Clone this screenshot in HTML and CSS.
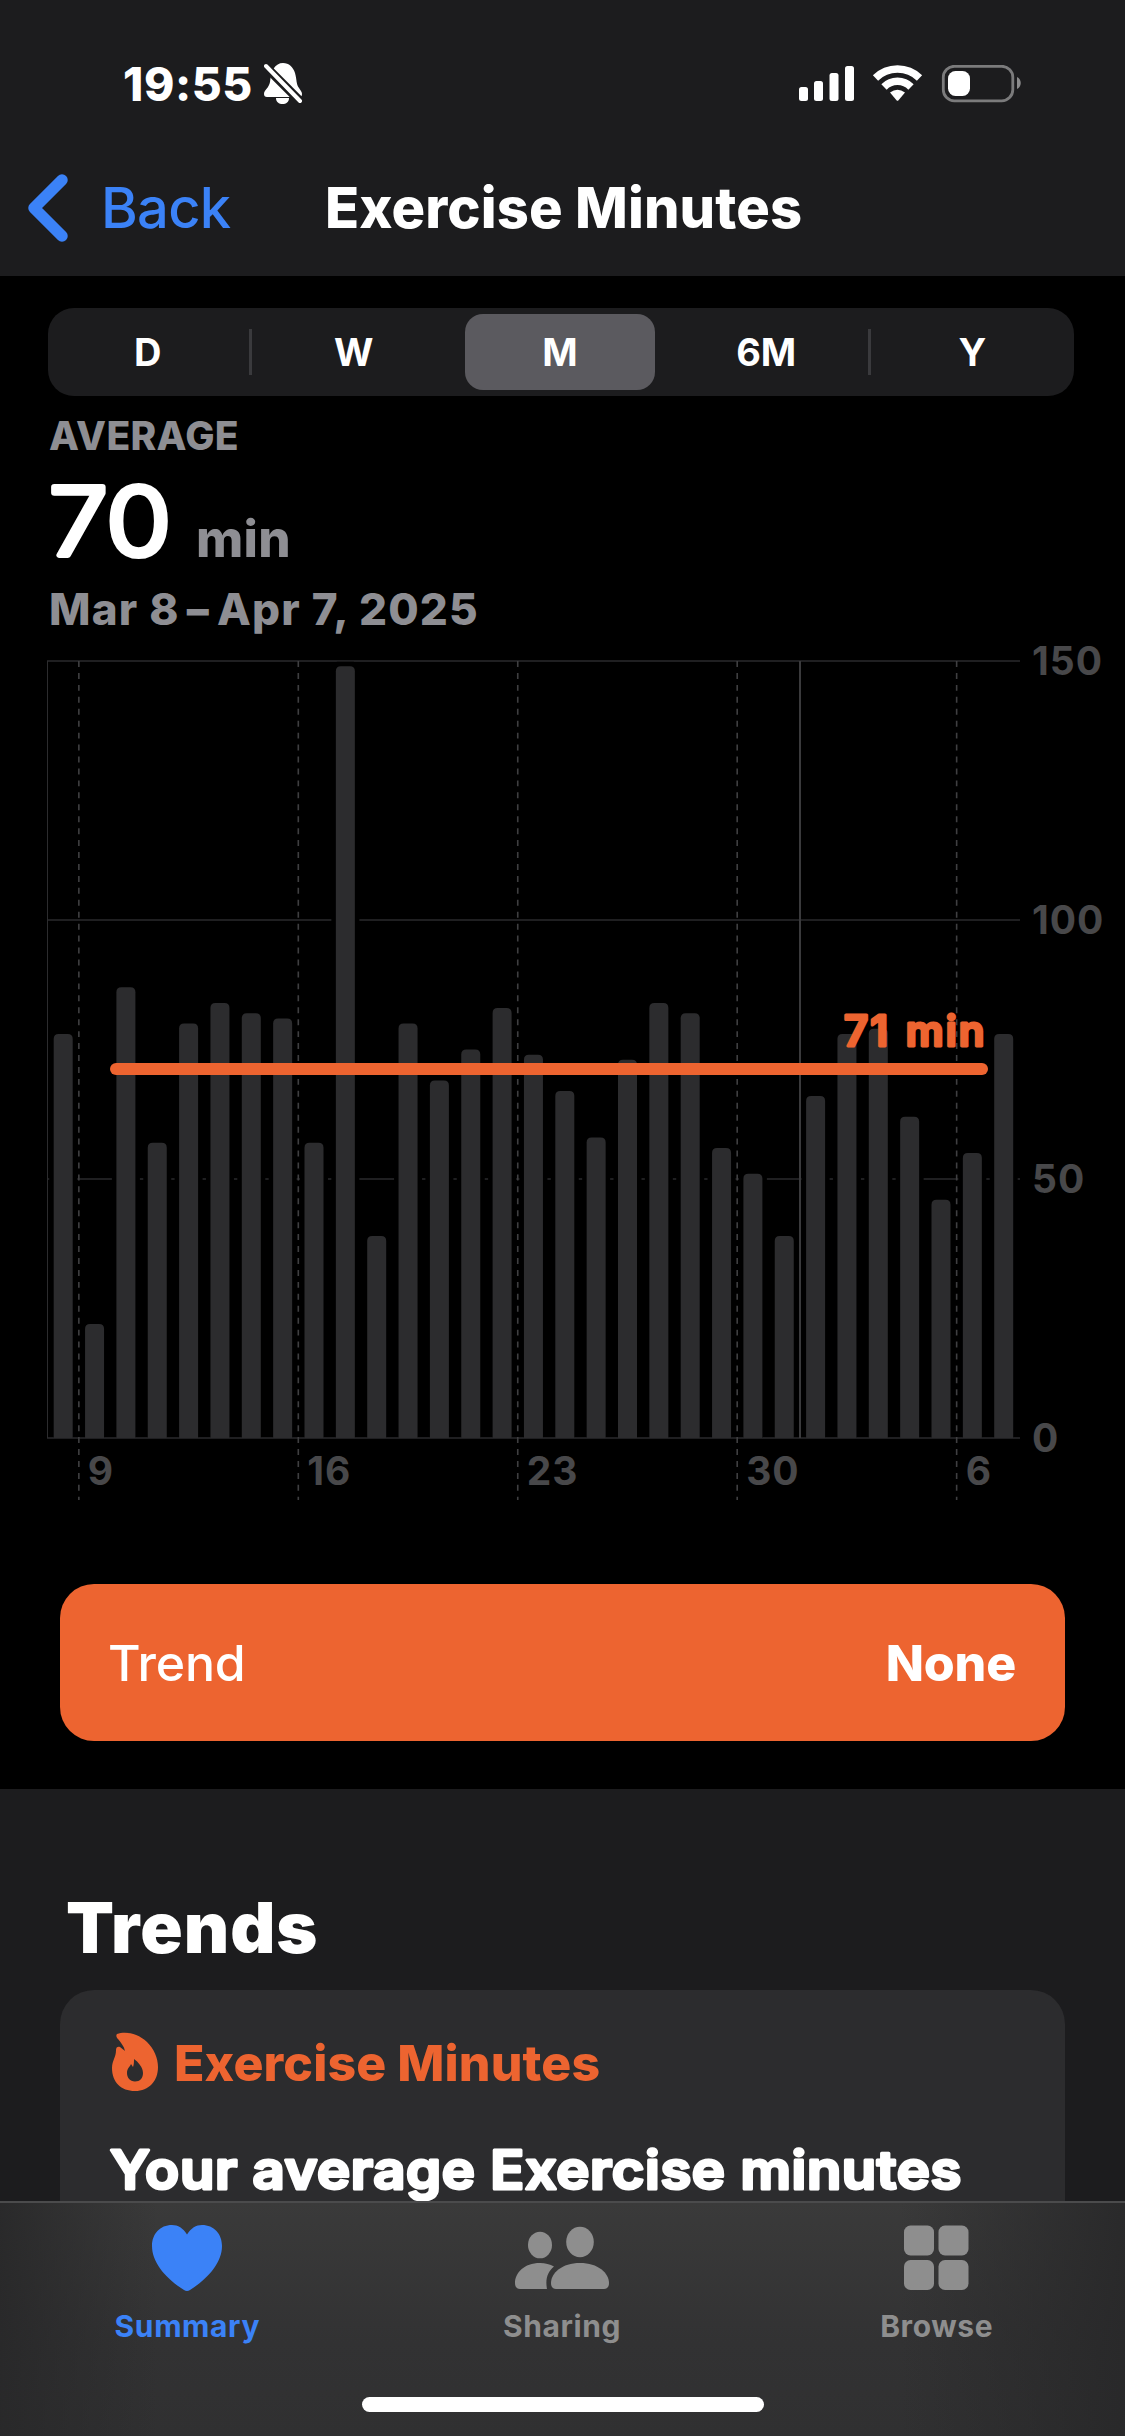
FILE: index.html
```html
<!DOCTYPE html>
<html lang="en">
<head>
    <meta charset="utf-8">
    <title>Exercise Minutes</title>
    <link rel="stylesheet" href="styles.css">
</head>
<body onload="drawChart()">
    <div class="content">
        <header>
            <div class="status">
                <span class="time">19:55</span>
                <svg class="bell" width="40" height="42" viewBox="0 0 40 42">
                    <path fill="#fff" d="M10 5C12 2 15 0 19 0c6 0 10 4 12 10 2 7 1 11 4 15 2 3 3 4 3 6 0 2-1 3-2 3H3c-2 0-3-1-3-3 0-4 5-6 6-12 1-6 1-10 4-14z"/>
                    <path fill="#fff" d="M12 35h13c0 4-3 6-6.500 6S12 39 12 35z"/>
                    <path stroke="#1c1c1e" stroke-width="9" d="M-2 0L42 44"/>
                    <path stroke="#fff" stroke-width="4" stroke-linecap="round" d="M2 3L36 38"/>
                </svg>
                <svg class="signal" width="222" height="38" viewBox="799 64 222 38">
                    <g fill="#fff">
                        <rect x="799" y="86" width="9" height="14" rx="2.500"/>
                        <rect x="814" y="80" width="9" height="20" rx="2.500"/>
                        <rect x="829.500" y="72" width="9" height="28" rx="2.500"/>
                        <rect x="845" y="65" width="9" height="35" rx="2.500"/>
                    </g>
                    <path fill="none" stroke="#fff" stroke-width="7.500" d="M875.500 77A31.500 31.500 0 0 1 919.500 77M884 86A19 19 0 0 1 911 86"/>
                    <path fill="#fff" d="M890 91.500Q897.500 86 905 91.500L898.500 99.300Q897.500 100.300 896.500 99.300z"/>
                    <rect x="943.300" y="65.300" width="69.500" height="34.500" rx="11" fill="none" stroke="#7b7b7c" stroke-width="2.800"/>
                    <rect x="948" y="70" width="22" height="25" rx="7.500" fill="#fff"/>
                    <path fill="#8b8b8c" d="M1017 76c5 2 5 10 0 12z"/>
                </svg>
            </div>
            <nav>
                <svg class="chevron" width="42" height="68" viewBox="0 0 42 68">
                    <path fill="none" stroke="#3b82f7" stroke-width="11.500" stroke-linecap="round" stroke-linejoin="round" d="M34 6L6 34L34 62"/>
                </svg>
                <span class="back">Back</span>
                <h1>Exercise Minutes</h1>
            </nav>
        </header>

        <div class="segments">
            <span>D</span>
            <i></i>
            <span>W</span>
            <i class="hidden"></i>
            <span class="selected">M</span>
            <i class="hidden"></i>
            <span>6M</span>
            <i></i>
            <span>Y</span>
        </div>

        <div class="stats">
            <div class="label">AVERAGE</div>
            <div class="value">
                <svg class="number" width="124" height="100" viewBox="46 471 124 100">
                    <text class="round" x="49" y="555" textLength="122" lengthAdjust="spacingAndGlyphs">70</text>
                </svg>
                <span class="unit">min</span>
            </div>
            <div class="date">Mar 8<b>–</b>Apr 7, 2025</div>
        </div>

        <svg class="chart" id="chart" width="1125" height="876" viewBox="0 634 1125 876"></svg>

        <div class="trend">
            <span>Trend</span>
            <b>None</b>
        </div>

        <div class="trends">
            <h2>Trends</h2>
            <div class="card">
                <div class="card-title">
                    <svg width="48" height="60" viewBox="0 0 48 60">
                        <path fill="#ed6430" d="M6 2C14-1 27 1 36 10c7 7 11 16 11 25 0 14-9 24-23 24S1 50 1 36c0-8 4-10 4-18 0-3 2-4 4-3l5 4C13 14 10 11 7 7 5 5 5 3 6 2z"/>
                        <path fill="#2c2c2e" d="M23 27c4 3 9 8 9 14 0 5-3 8.500-8 8.500s-8-4-8-8.500c0-5 3-6 4-9l2 3c1-3 1-5 1-8z"/>
                    </svg>
                    <span>Exercise Minutes</span>
                </div>
                <svg class="headline" width="870" height="70" viewBox="108 2136 870 70">
                    <text class="round" x="110" y="2190" textLength="852" lengthAdjust="spacingAndGlyphs">Your average Exercise minutes</text>
                </svg>
            </div>
        </div>
    </div>

    <footer>
        <div class="tabs">
            <div class="tab active">
                <svg width="70" height="66" viewBox="0 0 70 66">
                    <path fill="#3b82f7" d="M35 9.500C31 3 26 0 20 0 8 0 0 9 0 21c0 16 13 32 32 44q3 2 6 0c19-12 32-28 32-44C70 9 62 0 50 0 44 0 39 3 35 9.500z"/>
                </svg>
                <span>Summary</span>
            </div>
            <div class="tab">
                <svg width="94" height="66" viewBox="515 2225 94 66">
                    <g fill="#8e8e8e">
                        <ellipse cx="540" cy="2245" rx="12" ry="13.300"/>
                        <ellipse cx="580" cy="2242" rx="13.800" ry="15.200"/>
                        <path d="M551 2283c0-10 11-20 29-20s29 10 29 20c0 4-2 6-5 6h-48c-3 0-5-2-5-6z"/>
                        <path d="M515 2283c0-10 9-20 25-20q8 0 14 3.500c-6 5-9 12-7 22.500h-27c-3 0-5-2-5-6z"/>
                    </g>
                </svg>
                <span>Sharing</span>
            </div>
            <div class="tab">
                <svg width="65" height="66" viewBox="0 0 65 66">
                    <g fill="#8e8e8e">
                        <rect x="0" y="0.500" width="30" height="30" rx="6.500"/>
                        <rect x="34.500" y="0.500" width="30" height="30" rx="6.500"/>
                        <rect x="0" y="35" width="30" height="30" rx="6.500"/>
                        <rect x="34.500" y="35" width="30" height="30" rx="6.500"/>
                    </g>
                </svg>
                <span>Browse</span>
            </div>
        </div>
        <div class="home"></div>
    </footer>

    <script>
        var minutes = [78, 22, 87, 57, 80, 84, 82, 81, 57, 149, 39, 80, 69, 75, 83, 74,
            67, 58, 73, 84, 82, 56, 51, 39, 66, 78, 79, 62, 46, 55, 78];
        var weeks = { 1: "9", 8: "16", 15: "23", 22: "30", 29: "6" };
        var left = 47.5;
        var step = 31.35;
        var base = 1438;
        var unit = 5.18;

        function drawChart() {
            var out = "";

            // horizontal grid and scale
            for (let v = 0; v <= 150; v += 50) {
                let y = base - v * unit;
                out += `<line class="grid" x1="47" x2="1020" y1="${y}" y2="${y}"/>`;
                out += `<text class="axis" x="1032" y="${y + 14}">${v}</text>`;
            }

            // bars
            for (let i = 0; i < minutes.length; i++) {
                let x = left + step * i + 6.2;
                let y = base - minutes[i] * unit;
                let h = minutes[i] * unit;
                out += `<rect x="${x - 4.5}" y="${y - 4.5}" width="28" height="${h + 4}" rx="6"/>`;
                out += `<path class="bar" d="M${x} ${base}V${y + 5}q0 -5 5 -5h9q5 0 5 5V${base}z"/>`;
            }

            // week lines
            for (let i in weeks) {
                let x = left + step * i;
                out += `<line class="week" x1="${x}" x2="${x}" y1="661" y2="1500"/>`;
                out += `<text class="axis" x="${x + 9}" y="1485">${weeks[i]}</text>`;
            }

            out += `<line class="month" x1="800" x2="800" y1="661" y2="1438"/>`;
            out += `<line class="edge" x1="47.5" x2="47.5" y1="661" y2="1438"/>`;
            out += `<line class="average" x1="116" x2="982" y1="1069" y2="1069"/>`;
            out += `<text class="round average-text" x="844" y="1045.5">71<tspan dx="3"> min</tspan></text>`;

            document.getElementById("chart").innerHTML = out;
        }
    </script>
</body>
</html>
```
FILE: styles.css
```css
body {
    margin: 0;
    height: 2436px;
    overflow: hidden;
    background-color: #000;
    color: #fff;
    font-family: Inter, "Liberation Sans", sans-serif;
}
.content {
    height: 2201px;
    overflow: hidden;
}
svg {
    display: block;
    flex-shrink: 0;
}
header {
    height: 276px;
    background-color: #1c1c1e;
}
.status {
    display: flex;
    align-items: center;
    height: 167px;
    padding: 0 104px 0 123px;
}
.time {
    width: 130px;
    font-size: 46px;
    font-weight: 800;
    letter-spacing: 0.6px;
}
.bell {
    margin-left: 11px;
}
.signal {
    margin-left: auto;
}
nav {
    display: flex;
    align-items: center;
    height: 82px;
    padding-left: 28px;
}
.back {
    width: 224px;
    margin-left: 31px;
    font-size: 56px;
    font-weight: 500;
    color: #3b82f7;
    letter-spacing: -0.7px;
}
h1 {
    margin: 0;
    font-size: 56px;
    font-weight: 800;
    letter-spacing: 0.1px;
    white-space: nowrap;
}
.segments {
    display: flex;
    align-items: center;
    box-sizing: border-box;
    height: 88px;
    margin: 32px 51px 0 48px;
    padding: 6px 7px 6px 5px;
    background-color: #1c1c1e;
    border-radius: 26px;
}
.segments span {
    flex: 1;
    line-height: 76px;
    border-radius: 18px;
    font-size: 38px;
    font-weight: 650;
    text-align: center;
}
.segments .selected {
    background-color: #5b5a5f;
}
.segments i {
    width: 3px;
    height: 46px;
    margin: 0 7px;
    background-color: #3a3a3d;
}
.segments .hidden {
    visibility: hidden;
}
.stats {
    padding-left: 49px;
    color: #8e8e93;
    font-weight: 800;
}
.label {
    margin-top: 20px;
    line-height: 40px;
    font-size: 39px;
    letter-spacing: 0.3px;
}
.value {
    display: flex;
    align-items: center;
    height: 100px;
    margin-top: 15px;
}
.number {
    margin-left: -3px;
    overflow: visible;
}
.round {
    fill: #fff;
    stroke: #fff;
    stroke-linejoin: round;
}
.number .round {
    font-size: 93px;
    font-weight: 350;
    stroke-width: 6px;
}
.unit {
    margin: 35px 0 0 26px;
    font-size: 51px;
    letter-spacing: 0.3px;
}
.date {
    margin-top: 13px;
    line-height: 50px;
    font-size: 44px;
    letter-spacing: 1.2px;
}
.date b {
    margin: 0 7px;
}
.grid {
    stroke: #1f1f21;
    stroke-width: 2px;
}
.axis {
    fill: #48484a;
    font-size: 39px;
    font-weight: 650;
    letter-spacing: 1px;
}
.bar {
    fill: #2c2c2e;
}
.week {
    stroke: #3f3f41;
    stroke-width: 1.6px;
    stroke-dasharray: 5.97 5.97;
}
.month {
    stroke: #3a3a3c;
    stroke-width: 2px;
}
.edge {
    stroke: #2c2c2e;
    stroke-width: 1px;
}
.average {
    stroke: #ed6430;
    stroke-width: 12px;
    stroke-linecap: round;
}
.average-text {
    fill: #ed6430;
    stroke: #ed6430;
    stroke-width: 3px;
    font-size: 42px;
    font-weight: 600;
    letter-spacing: 2.1px;
}
.trend {
    display: flex;
    align-items: center;
    justify-content: space-between;
    height: 157px;
    margin: 74px 60px 48px;
    padding: 0 49px 0 48px;
    box-sizing: border-box;
    border-radius: 34px;
    background-color: #ed6430;
    font-size: 50px;
    font-weight: 500;
    letter-spacing: -0.2px;
}
.trend b {
    font-weight: 800;
}
.trends {
    height: 500px;
    padding: 99px 60px 0;
    background-color: #1c1c1e;
}
h2 {
    margin: 0 0 22px 6px;
    line-height: 80px;
    font-size: 70px;
    font-weight: 900;
    letter-spacing: 1px;
}
.card {
    height: 300px;
    padding: 43px 0 0 48px;
    border-radius: 34px;
    background-color: #2c2c2e;
}
.card-title {
    display: flex;
    align-items: center;
    gap: 15px;
    margin-left: 3px;
    height: 60px;
    color: #ed6430;
    font-size: 50px;
    font-weight: 800;
    letter-spacing: 0.1px;
}
.card-title svg {
    margin-top: -3px;
}
.headline {
    margin-top: 42px;
}
.headline .round {
    font-size: 53px;
    font-weight: 600;
    letter-spacing: 0.6px;
    stroke-width: 3px;
}
footer {
    box-sizing: border-box;
    height: 235px;
    border-top: 2px solid #4b4b4c;
    background: linear-gradient(90deg, rgba(40, 40, 41, 0.9), rgba(40, 40, 41, 0) 14%, rgba(40, 40, 41, 0) 80%, rgba(40, 40, 41, 0.9)),
        linear-gradient(#3a3a3a, #323233 60%, #303031);
}
.tabs {
    display: flex;
    height: 193px;
    margin-right: 1px;
}
.tab {
    display: flex;
    flex: 1;
    flex-direction: column;
    align-items: center;
    padding-top: 22px;
    color: #8e8e8e;
    font-size: 30px;
    font-weight: 650;
    letter-spacing: 0.6px;
}
.tab span {
    margin-top: 17px;
}
.active {
    color: #3b82f7;
}
.home {
    width: 402px;
    height: 15px;
    margin: 1px auto 0;
    border-radius: 8px;
    background-color: #fff;
}
```
